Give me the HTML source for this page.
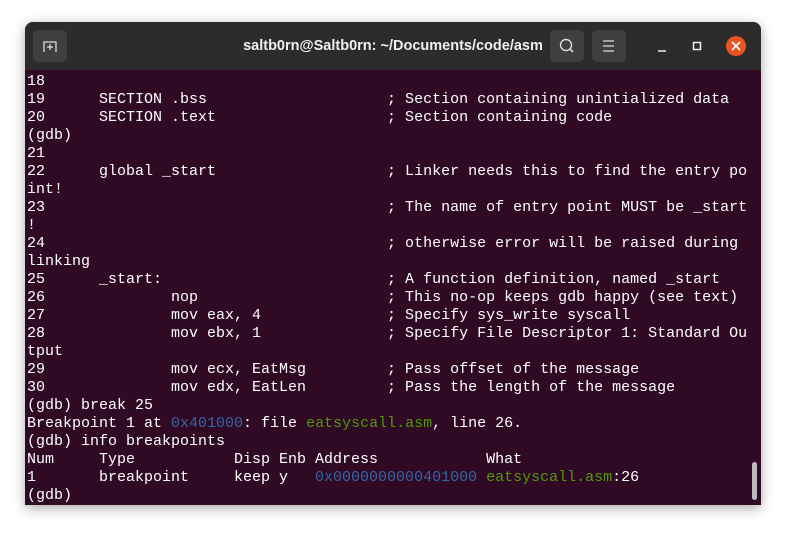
<!DOCTYPE html><html><head><style>
body{margin:0;width:786px;height:533px;background:#fff;position:relative;overflow:hidden;font-family:"Liberation Sans",sans-serif}
.win{position:absolute;left:25px;top:22px;width:736px;height:483px;border-radius:8px 8px 0 0;overflow:hidden;box-shadow:0 3px 12px rgba(0,0,0,.35);background:#300a24}
.tb{position:absolute;left:0;top:0;width:736px;height:48px;background:#2c2c2c}
.btn{position:absolute;top:8px;width:34px;height:32px;background:#3f3f3f;border-radius:5px}
.title{position:absolute;left:0;right:0;top:16px;text-align:center;color:#f0f0f0;font-weight:bold;font-size:14.5px}
pre{position:absolute;left:2px;top:51px;margin:0;font-family:"Liberation Mono",monospace;font-size:15px;line-height:18px;color:#fff}
.b{color:#3465a4}.g{color:#4e9a06}
.sb{position:absolute;right:4px;top:440px;width:5px;height:38px;background:#bbb;border-radius:3px}
</style></head><body>
<div class="win">
<div class="tb">
<div class="btn" style="left:8px"><svg width="34" height="32"><path d="M11 22V12h12v10" stroke="#ddd" fill="none" stroke-width="1.3"/><path d="M17 14v6M14 17h6" stroke="#ddd" stroke-width="1.3"/></svg></div>
<div class="title">saltb0rn@Saltb0rn: ~/Documents/code/asm</div>
<div class="btn" style="left:525px"><svg width="34" height="32"><circle cx="16" cy="15" r="5.5" stroke="#ddd" fill="none" stroke-width="1.4"/><path d="M20 19l3 3" stroke="#ddd" stroke-width="1.6"/></svg></div>
<div class="btn" style="left:567px"><svg width="34" height="32"><path d="M11 11h11M11 16h11M11 21h11" stroke="#ddd" stroke-width="1.3"/></svg></div>
<svg style="position:absolute;left:620px;top:12px" width="110" height="26"><path d="M13 17h8" stroke="#eee" stroke-width="1.5"/><rect x="48.5" y="8.5" width="7" height="7" stroke="#eee" fill="none" stroke-width="1.5"/><circle cx="91" cy="12" r="10" fill="#e95420"/><path d="M87 8l8 8M95 8l-8 8" stroke="#fff" stroke-width="1.6"/></svg>
</div>
<pre>18
19      SECTION .bss                    ; Section containing unintialized data
20      SECTION .text                   ; Section containing code
(gdb)
21
22      global _start                   ; Linker needs this to find the entry po
int!
23                                      ; The name of entry point MUST be _start
!
24                                      ; otherwise error will be raised during
linking
25      _start:                         ; A function definition, named _start
26              nop                     ; This no-op keeps gdb happy (see text)
27              mov eax, 4              ; Specify sys_write syscall
28              mov ebx, 1              ; Specify File Descriptor 1: Standard Ou
tput
29              mov ecx, EatMsg         ; Pass offset of the message
30              mov edx, EatLen         ; Pass the length of the message
(gdb) break 25
Breakpoint 1 at <span class="b">0x401000</span>: file <span class="g">eatsyscall.asm</span>, line 26.
(gdb) info breakpoints
Num     Type           Disp Enb Address            What
1       breakpoint     keep y   <span class="b">0x0000000000401000</span> <span class="g">eatsyscall.asm</span>:26
(gdb)</pre>
<div class="sb"></div>
</div>
</body></html>
